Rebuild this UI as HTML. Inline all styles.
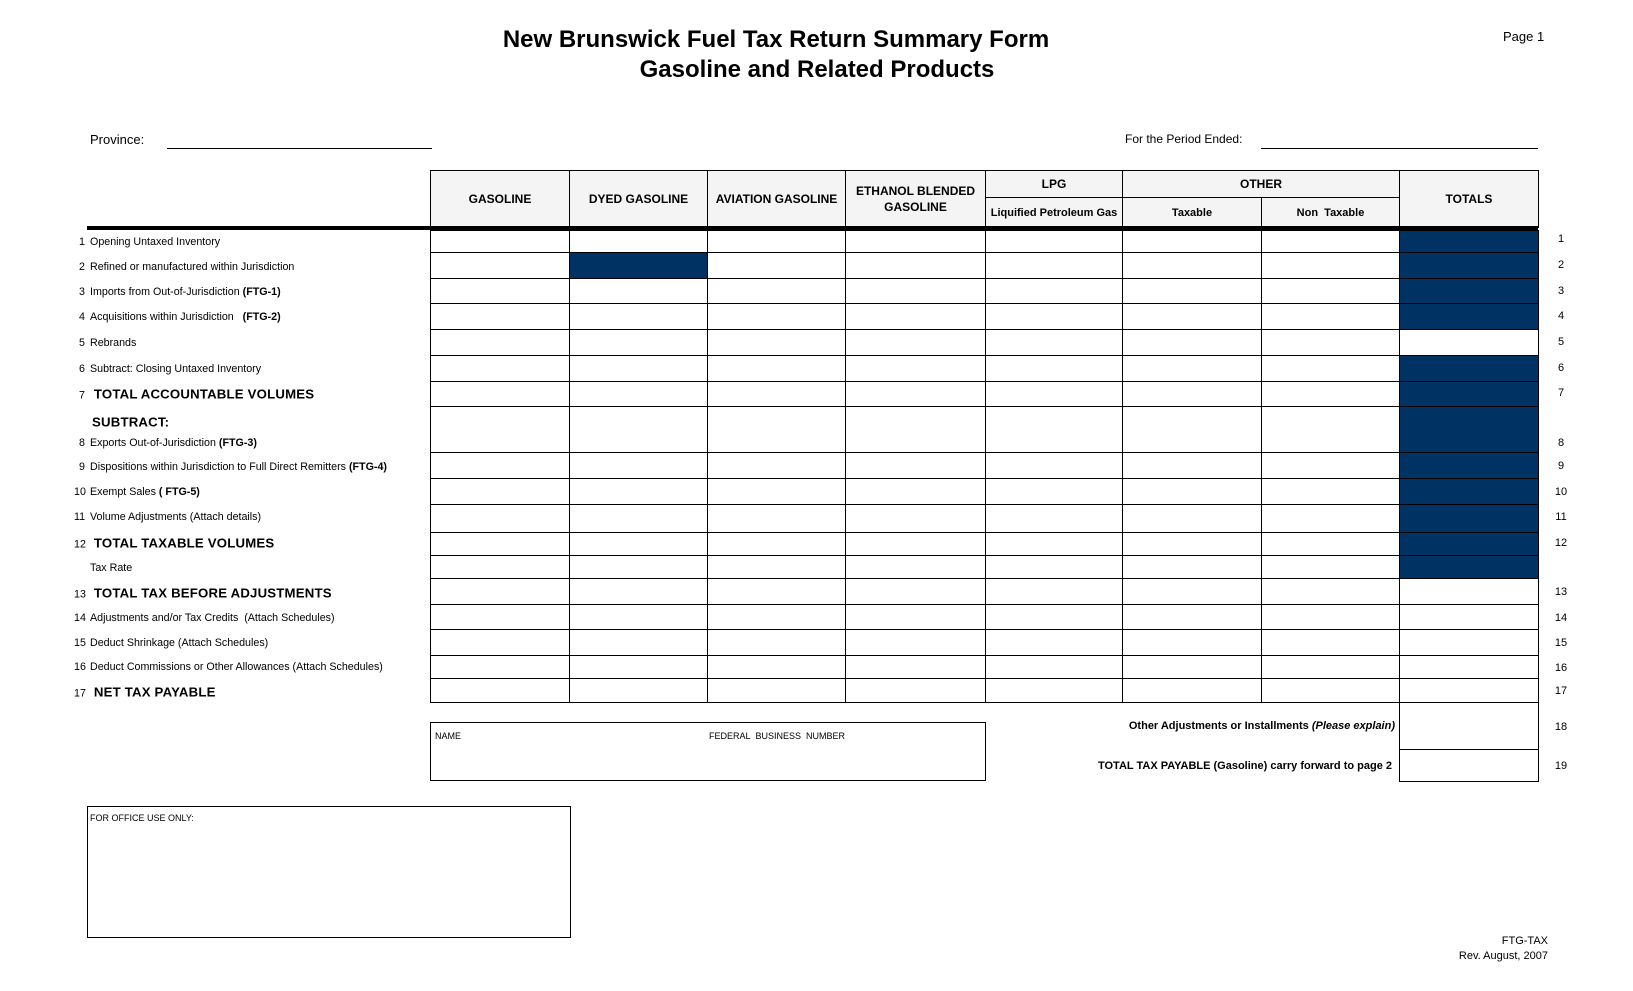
<!DOCTYPE html>
<html><head><meta charset="utf-8"><style>
*{margin:0;padding:0;box-sizing:border-box}
body{width:1633px;height:991px;background:#fff;position:relative;font-family:"Liberation Sans",Arial,sans-serif;color:#000;overflow:hidden}
.a{position:absolute;white-space:nowrap}
.t{font-weight:bold;font-size:24px;text-align:center}
.c{position:absolute;border:1px solid #000}
.h{background:#f4f4f4;font-weight:bold;font-size:12px;display:flex;align-items:center;justify-content:center;text-align:center;line-height:16px}
.n{background:#003263}
.lb{font-size:10.7px;left:74px;transform:translateY(-50%)}
.lb b{font-weight:bold}
.big{font-size:13.2px;font-weight:bold;letter-spacing:.2px}
.num{display:inline-block;width:11px;text-align:right;margin-right:5px}
.rn{font-size:11px;left:1549px;width:24px;text-align:center;transform:translateY(-50%)}
</style></head><body>
<div class="a t" style="top:26px;left:0;width:1552px">New Brunswick Fuel Tax Return Summary Form</div>
<div class="a t" style="top:56px;left:40px;width:1554px">Gasoline and Related Products</div>
<div class="a" style="left:1503px;top:29px;font-size:13px">Page 1</div>
<div class="a" style="left:90px;top:132px;font-size:13px">Province:</div>
<div class="a" style="left:167px;top:148px;width:265px;border-top:1px solid #000"></div>
<div class="a" style="left:1125px;top:132px;font-size:12px">For the Period Ended:</div>
<div class="a" style="left:1261px;top:148px;width:277px;border-top:1px solid #000"></div>

<div id="grid"></div>
<div class="a" style="left:87px;top:226px;width:1451px;height:4px;background:#000"></div>
<script>
var cols=[430,569,707,845,985,1122,1261,1399,1538];
var rows=[230,252,278,303,329,355,381,406,452,478,504,532,555,578,604,629,655,678,702];
var h='';
function cell(x1,y1,x2,y2,cls,txt){h+='<div class="c '+(cls||'')+'" style="left:'+x1+'px;top:'+y1+'px;width:'+(x2-x1+1)+'px;height:'+(y2-y1+1)+'px">'+(txt||'')+'</div>';}
cell(430,170,569,227,'h','GASOLINE');
cell(569,170,707,227,'h','DYED GASOLINE');
cell(707,170,845,227,'h','AVIATION GASOLINE');
cell(845,170,985,227,'h','ETHANOL BLENDED<br>GASOLINE');
cell(985,170,1122,197,'h','LPG');
cell(985,197,1122,227,'h','<span style="font-size:11px">Liquified Petroleum Gas</span>');
cell(1122,170,1399,197,'h','OTHER');
cell(1122,197,1261,227,'h','<span style="font-size:11px">Taxable</span>');
cell(1261,197,1399,227,'h','<span style="font-size:11px">Non&nbsp; Taxable</span>');
cell(1399,170,1538,227,'h','TOTALS');
var navyTot=[0,1,2,3,5,6,7,8,9,10,11,12];
for(var r=0;r<rows.length-1;r++){for(var c=0;c<8;c++){var cls='';
 if(c==7&&navyTot.indexOf(r)>=0)cls='n';
 if(c==1&&r==1)cls='n';
 cell(cols[c],rows[r],cols[c+1],rows[r+1],cls);}}
cell(1399,702,1538,749);
cell(1399,749,1538,781);
document.getElementById('grid').outerHTML=h;
</script>

<div class="a lb" style="top:242px"><span class="num">1</span>Opening Untaxed Inventory</div>
<div class="a lb" style="top:267px"><span class="num">2</span>Refined or manufactured within Jurisdiction</div>
<div class="a lb" style="top:292px"><span class="num">3</span>Imports from Out-of-Jurisdiction <b>(FTG-1)</b></div>
<div class="a lb" style="top:317px"><span class="num">4</span>Acquisitions within Jurisdiction &nbsp; <b>(FTG-2)</b></div>
<div class="a lb" style="top:343px"><span class="num">5</span>Rebrands</div>
<div class="a lb" style="top:369px"><span class="num">6</span>Subtract: Closing Untaxed Inventory</div>
<div class="a lb" style="top:394px"><span class="num">7</span><span class="big">&nbsp;TOTAL ACCOUNTABLE VOLUMES</span></div>
<div class="a lb" style="top:422px;left:92px"><span class="big">SUBTRACT:</span></div>
<div class="a lb" style="top:443px"><span class="num">8</span>Exports Out-of-Jurisdiction <b>(FTG-3)</b></div>
<div class="a lb" style="top:467px"><span class="num">9</span>Dispositions within Jurisdiction to Full Direct Remitters <b>(FTG-4)</b></div>
<div class="a lb" style="top:492px"><span class="num">10</span>Exempt Sales <b>( FTG-5)</b></div>
<div class="a lb" style="top:517px"><span class="num">11</span>Volume Adjustments (Attach details)</div>
<div class="a lb" style="top:543px"><span class="num">12</span><span class="big">&nbsp;TOTAL TAXABLE VOLUMES</span></div>
<div class="a lb" style="top:568px"><span class="num"></span>Tax Rate</div>
<div class="a lb" style="top:593px"><span class="num">13</span><span class="big">&nbsp;TOTAL TAX BEFORE ADJUSTMENTS</span></div>
<div class="a lb" style="top:618px"><span class="num">14</span>Adjustments and/or Tax Credits &nbsp;(Attach Schedules)</div>
<div class="a lb" style="top:643px"><span class="num">15</span>Deduct Shrinkage (Attach Schedules)</div>
<div class="a lb" style="top:667px"><span class="num">16</span>Deduct Commissions or Other Allowances (Attach Schedules)</div>
<div class="a lb" style="top:692px"><span class="num">17</span><span class="big">&nbsp;NET TAX PAYABLE</span></div>

<div class="a rn" style="top:239px">1</div><div class="a rn" style="top:265px">2</div>
<div class="a rn" style="top:291px">3</div><div class="a rn" style="top:316px">4</div>
<div class="a rn" style="top:342px">5</div><div class="a rn" style="top:368px">6</div>
<div class="a rn" style="top:393px">7</div><div class="a rn" style="top:443px">8</div>
<div class="a rn" style="top:466px">9</div><div class="a rn" style="top:492px">10</div>
<div class="a rn" style="top:517px">11</div><div class="a rn" style="top:543px">12</div>
<div class="a rn" style="top:592px">13</div><div class="a rn" style="top:618px">14</div>
<div class="a rn" style="top:643px">15</div><div class="a rn" style="top:668px">16</div>
<div class="a rn" style="top:691px">17</div><div class="a rn" style="top:727px">18</div>
<div class="a rn" style="top:766px">19</div>

<div class="a" style="right:238px;top:720px;font-size:11px;font-weight:bold">Other Adjustments or Installments <i>(Please explain)</i></div>
<div class="a" style="right:241px;top:760px;font-size:11px;font-weight:bold">TOTAL TAX PAYABLE (Gasoline) carry forward to page 2</div>

<div class="c" style="left:430px;top:722px;width:556px;height:59px"></div>
<div class="a" style="left:435px;top:731px;font-size:9px">NAME</div>
<div class="a" style="left:709px;top:731px;font-size:9px">FEDERAL&nbsp; BUSINESS&nbsp; NUMBER</div>

<div class="c" style="left:87px;top:806px;width:484px;height:132px"></div>
<div class="a" style="left:90px;top:813px;font-size:9px">FOR OFFICE USE ONLY:</div>

<div class="a" style="left:1400px;width:148px;text-align:right;top:935px;font-size:11px">FTG-TAX</div>
<div class="a" style="left:1390px;width:158px;text-align:right;top:950px;font-size:11px">Rev. August, 2007</div>
</body></html>
